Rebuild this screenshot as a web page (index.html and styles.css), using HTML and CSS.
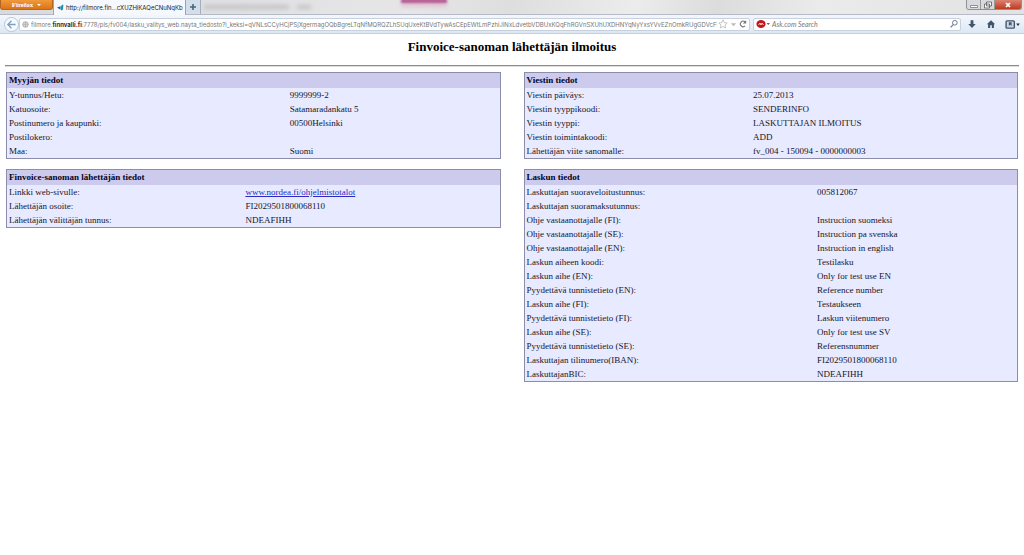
FILE: index.html
```
<!DOCTYPE html>
<html lang="fi">
<head>
<meta charset="utf-8">
<title>Finvoice-sanoman lähettäjän ilmoitus</title>
<link rel="stylesheet" href="styles.css">
</head>
<body>
<header class="browser">
  <div class="tabstrip">
    <button class="menu-btn" type="button">Firefox <span class="caret"></span></button>
    <button class="tab" type="button">
      <svg class="favicon" viewBox="0 0 12 12"><path d="M6 5 9 1l2 1-1 8-3 1z" fill="#1794ae"/><path d="M0 6 6 4v6z" fill="#2563a0"/></svg>
      <span class="tab-title">http://filmore.fin...cXUZHiKAQeCNuNqKb</span>
    </button>
    <button class="new-tab" type="button" aria-label="New tab"><svg viewBox="0 0 8 8"><path d="M4 1v6M1 4h6" stroke="#4c6382" stroke-width="1.6"/></svg></button>
    <div class="glass"><span class="ghost"></span><span class="ghost ghost-short"></span><span class="pink"></span></div>
    <div class="window-controls">
      <button type="button" aria-label="Minimize"><svg viewBox="0 0 10 8"><path d="M1.500 4.500h7v2h-7z" fill="#fff" stroke="#777" stroke-width=".8"/></svg></button>
      <button type="button" aria-label="Restore"><svg viewBox="0 0 10 8"><path d="M3.500 1h5v4h-5zM1.500 3h5v4h-5z" fill="#fff" stroke="#666" stroke-width=".9"/></svg></button>
      <button class="close" type="button" aria-label="Close"><svg viewBox="0 0 10 8"><path d="m3 2 4 4M7 2 3 6" stroke="#fff" stroke-width="1.700"/></svg></button>
    </div>
  </div>
  <nav class="navbar">
    <button class="back" type="button" aria-label="Back"><svg viewBox="0 0 12 12"><path d="M10.500 6h-8M6 2 2 6l4 4" fill="none" stroke="#7f9fc2" stroke-width="1.500"/></svg></button>
    <div class="field address">
      <svg class="globe" viewBox="0 0 10 10"><circle cx="5" cy="5" r="4" fill="#eee" stroke="#999"/><path d="M1 5h8M5 1v8M2 3h6M2 7h6" stroke="#999" stroke-width=".7"/></svg>
      <label class="host" for="url">filmore.<b>finnvalli.fi</b></label>
      <input id="url" class="url" type="text" value=":7778/pls/fv004/lasku_valitys_web.nayta_tiedosto?i_keksi=qVNLsCCyHCjPSjXgermagOQbBgreLTqNfMQRQZLhSUqUxeKtBVdTywAsCEpEWtLmPzhiJiNxLdvetbVDBUxKQqFhRGVnSXUhUXDHNYqNyYxsYVvEZnOmkRUgGDVcFiegB">
      <button class="icon" type="button" aria-label="Bookmark"><svg viewBox="0 0 12 12"><path d="m6 1 1.500 3.400 3.500.4-2.600 2.400.7 3.600L6 9l-3.100 1.800.7-3.600L1 4.800l3.500-.4z" fill="none" stroke="#aaa" stroke-width=".8"/></svg></button>
      <button class="icon small" type="button" aria-label="History"><svg viewBox="0 0 8 8"><path d="M1 2.500h6L4 6z" fill="#bbb"/></svg></button>
      <button class="icon" type="button" aria-label="Reload"><svg viewBox="0 0 12 12"><path d="M8.500 8.300A3.300 3.300 0 1 1 8.500 3.600" fill="none" stroke="#777" stroke-width="1.300"/><path d="M9.800 1.500v4h-4z" fill="#777"/></svg></button>
    </div>
    <div class="field search">
      <button class="engine" type="button" aria-label="Search engine"><svg viewBox="0 0 14 10"><ellipse cx="5" cy="5" rx="4.600" ry="4" fill="#c4161c"/><path d="M2.500 6 4 4l1 2 1-2 1.500 2" fill="none" stroke="#fff" stroke-width=".8"/><path d="M10.500 4h3.500l-1.700 2z" fill="#666"/></svg></button>
      <input class="query" type="text" aria-label="Search" placeholder="Ask.com Search">
      <button class="icon" type="button" aria-label="Go"><svg viewBox="0 0 12 12"><circle cx="7" cy="4.500" r="2.800" fill="none" stroke="#6c7f9a" stroke-width="1.200"/><path d="M5 6.800 2 10" stroke="#6c7f9a" stroke-width="1.600"/></svg></button>
    </div>
    <div class="tools">
      <button class="icon" type="button" aria-label="Downloads"><svg viewBox="0 0 12 12"><path d="M4.300 1.500h3.400V6h2.800L6 10.800 1.500 6h2.800z" fill="#44546a"/></svg></button>
      <button class="icon" type="button" aria-label="Home"><svg viewBox="0 0 12 12"><path d="m6 1.500 5 4.700H9.500v4.500H7V7.500H5v3.200H2.500V6.200H1z" fill="#44546a"/></svg></button>
      <button class="icon wide" type="button" aria-label="Bookmarks"><svg viewBox="0 0 16 12"><rect x="1" y="2" width="9" height="8" rx="1" fill="#cdd8e6" stroke="#44546a" stroke-width="1.500"/><path d="M4 3.500h3v4L5.500 6.300 4 7.500z" fill="#44546a"/><path d="M12 5h4l-2 2.500z" fill="#333"/></svg></button>
    </div>
  </nav>
</header>
<main>
  <h1>Finvoice-sanoman lähettäjän ilmoitus</h1>
  <hr>
  <div class="panels">
    <table class="panel">
      <colgroup><col class="label-wide"><col></colgroup>
      <thead><tr><th colspan="2">Myyjän tiedot</th></tr></thead>
      <tbody>
        <tr><td>Y-tunnus/Hetu:</td><td>9999999-2</td></tr>
        <tr><td>Katuosoite:</td><td>Satamaradankatu 5</td></tr>
        <tr><td>Postinumero ja kaupunki:</td><td>00500Helsinki</td></tr>
        <tr><td>Postilokero:</td><td></td></tr>
        <tr><td>Maa:</td><td>Suomi</td></tr>
      </tbody>
    </table>
    <table class="panel">
      <colgroup><col class="label-narrow"><col></colgroup>
      <thead><tr><th colspan="2">Viestin tiedot</th></tr></thead>
      <tbody>
        <tr><td>Viestin päiväys:</td><td>25.07.2013</td></tr>
        <tr><td>Viestin tyyppikoodi:</td><td>SENDERINFO</td></tr>
        <tr><td>Viestin tyyppi:</td><td>LASKUTTAJAN ILMOITUS</td></tr>
        <tr><td>Viestin toimintakoodi:</td><td>ADD</td></tr>
        <tr><td>Lähettäjän viite sanomalle:</td><td>fv_004 - 150094 - 0000000003</td></tr>
      </tbody>
    </table>
    <table class="panel">
      <colgroup><col class="label-half"><col></colgroup>
      <thead><tr><th colspan="2">Finvoice-sanoman lähettäjän tiedot</th></tr></thead>
      <tbody>
        <tr><td>Linkki web-sivulle:</td><td><a href="#">www.nordea.fi/ohjelmistotalot</a></td></tr>
        <tr><td>Lähettäjän osoite:</td><td>FI2029501800068110</td></tr>
        <tr><td>Lähettäjän välittäjän tunnus:</td><td>NDEAFIHH</td></tr>
      </tbody>
    </table>
    <table class="panel">
      <colgroup><col class="label-widest"><col></colgroup>
      <thead><tr><th colspan="2">Laskun tiedot</th></tr></thead>
      <tbody>
        <tr><td>Laskuttajan suoraveloitustunnus:</td><td>005812067</td></tr>
        <tr><td>Laskuttajan suoramaksutunnus:</td><td></td></tr>
        <tr><td>Ohje vastaanottajalle (FI):</td><td>Instruction suomeksi</td></tr>
        <tr><td>Ohje vastaanottajalle (SE):</td><td>Instruction pa svenska</td></tr>
        <tr><td>Ohje vastaanottajalle (EN):</td><td>Instruction in english</td></tr>
        <tr><td>Laskun aiheen koodi:</td><td>Testilasku</td></tr>
        <tr><td>Laskun aihe (EN):</td><td>Only for test use EN</td></tr>
        <tr><td>Pyydettävä tunnistetieto (EN):</td><td>Reference number</td></tr>
        <tr><td>Laskun aihe (FI):</td><td>Testaukseen</td></tr>
        <tr><td>Pyydettävä tunnistetieto (FI):</td><td>Laskun viitenumero</td></tr>
        <tr><td>Laskun aihe (SE):</td><td>Only for test use SV</td></tr>
        <tr><td>Pyydettävä tunnistetieto (SE):</td><td>Referensnummer</td></tr>
        <tr><td>Laskuttajan tilinumero(IBAN):</td><td>FI2029501800068110</td></tr>
        <tr><td>LaskuttajanBIC:</td><td>NDEAFIHH</td></tr>
      </tbody>
    </table>
  </div>
</main>
</body>
</html>
```
FILE: styles.css
```
* { box-sizing: border-box; }
body { margin: 0; background: #fff; color: #15152a; font-family: "Liberation Serif", "Times New Roman", serif; }
button, input { margin: 0; padding: 0; border: 0; background: none; font: inherit; color: inherit; }
svg { display: block; }

.browser { font-family: Inter, "Open Sans", sans-serif; font-size: 6px; line-height: 10px; }
.tabstrip { display: flex; height: 15px; background: linear-gradient(100deg, #d9dadd 0%, #e6e6e7 40%, #dedede 50%, #ececec 62%, #dcdcdc 70%, #ebebeb 80%, #e2e2e2 100%); border-bottom: 1px solid #b5bac6; }
.menu-btn { width: 53px; height: 10px; display: flex; align-items: center; justify-content: center; gap: 4px; background: linear-gradient(#ef9a3c, #dd7414); border: 1px solid #b5651d; border-top: 0; border-radius: 0 0 3px 3px; color: #fff; font-family: "Liberation Serif", serif; font-size: 7px; font-weight: bold; }
.caret { border: 2px solid transparent; border-top-color: #fff; border-bottom: 0; }
.tab { width: 133px; height: 15px; display: flex; align-items: center; gap: 2px; padding: 0 0 0 3px; background: #f5f9fd; border: 1px solid #98a5b8; border-width: 0 1px; color: #222; }
.favicon { width: 7px; height: 7px; flex: none; }
.tab-title { white-space: nowrap; }
.new-tab { width: 15px; height: 14px; display: grid; place-items: center; background: #d3deeb; border: 1px solid #a3afc0; border-width: 0 1px 0 0; }
.new-tab svg { width: 8px; height: 8px; }
.glass { flex: 1; display: flex; align-items: flex-start; overflow: hidden; }
.ghost { width: 85px; height: 4px; margin: 5px 8px 0 3px; background: #c2c2c5; filter: blur(2px); }
.ghost-short { width: 14px; margin-left: 0; }
.pink { width: 46px; height: 4px; margin: -1px 0 0 82px; background: #b65a92; box-shadow: 0 3px 4px #dcb3cb; filter: blur(1px); }
.window-controls { display: flex; height: 10px; margin-right: 2px; border: 1px solid #8d9096; border-top: 0; border-radius: 0 0 3px 3px; overflow: hidden; }
.window-controls button { width: 14px; display: grid; place-items: center; background: #d9dadd; border-right: 1px solid #999; }
.window-controls svg { width: 10px; height: 8px; }
.window-controls .close { width: 26px; border: 0; background: linear-gradient(#db8271, #bf3a22); }

.navbar { display: flex; align-items: center; height: 19px; padding: 0 4px; background: linear-gradient(#f3f7fc, #dce8f5); border-bottom: 1px solid #c3d0df; }
.back { width: 15px; height: 15px; flex: none; display: grid; place-items: center; border: 1px solid #b4c5d8; border-radius: 50%; background: #f6fafd; }
.back svg { width: 11px; height: 11px; }
.field { display: flex; align-items: center; height: 13px; background: #fff; border: 1px solid #c7d1dd; border-radius: 2px; }
.address { flex: 1; min-width: 0; padding-left: 2px; color: #777; }
.globe { width: 7px; height: 7px; flex: none; margin-right: 2px; }
.host, .url, .query { height: 11px; line-height: 11px; }
.host { flex: none; }
.host b { color: #333; }
.url { flex: 1; min-width: 0; }
.icon { width: 12px; height: 10px; flex: none; display: grid; place-items: center; }
.icon svg { width: 10px; height: 10px; }
.small { width: 8px; }
.small svg { width: 7px; height: 7px; }
.search { width: 208px; margin-left: 3px; padding-left: 2px; color: #777; font-family: Lato, sans-serif; font-size: 7px; font-style: italic; }
.engine svg { width: 14px; height: 10px; }
.query { flex: 1; min-width: 0; padding-left: 2px; }
.query::placeholder { color: #777; }
.tools { display: flex; gap: 7px; padding: 0 0 0 5px; }
.tools .wide { width: 16px; }
.tools .wide svg { width: 15px; height: 11px; }

main { padding: 5px 5px 10px; }
h1 { margin: 0; font-size: 13px; line-height: 16px; text-align: center; color: #000; }
hr { margin: 10px 0 5px; border: 0; border-top: 1px solid #8d8d8d; border-bottom: 1px solid #ddd; }
.panels { display: grid; grid-template-columns: 1fr 1fr; align-items: start; gap: 10px 23px; padding: 0 1px; }
.panel { width: 100%; table-layout: fixed; border-collapse: separate; border-spacing: 0; border: 1px solid #8c8cab; background: #e8eaff; font-size: 9px; line-height: 14px; }
.panel th { padding: 0 2px 1px; background: #cccbee; text-align: left; color: #05051c; }
.panel td { height: 14px; padding: 0 2px; }
.label-narrow { width: 46%; }
.label-half { width: 48%; }
.label-wide { width: 57%; }
.label-widest { width: 59%; }
a { color: #2a2ac8; }
```
